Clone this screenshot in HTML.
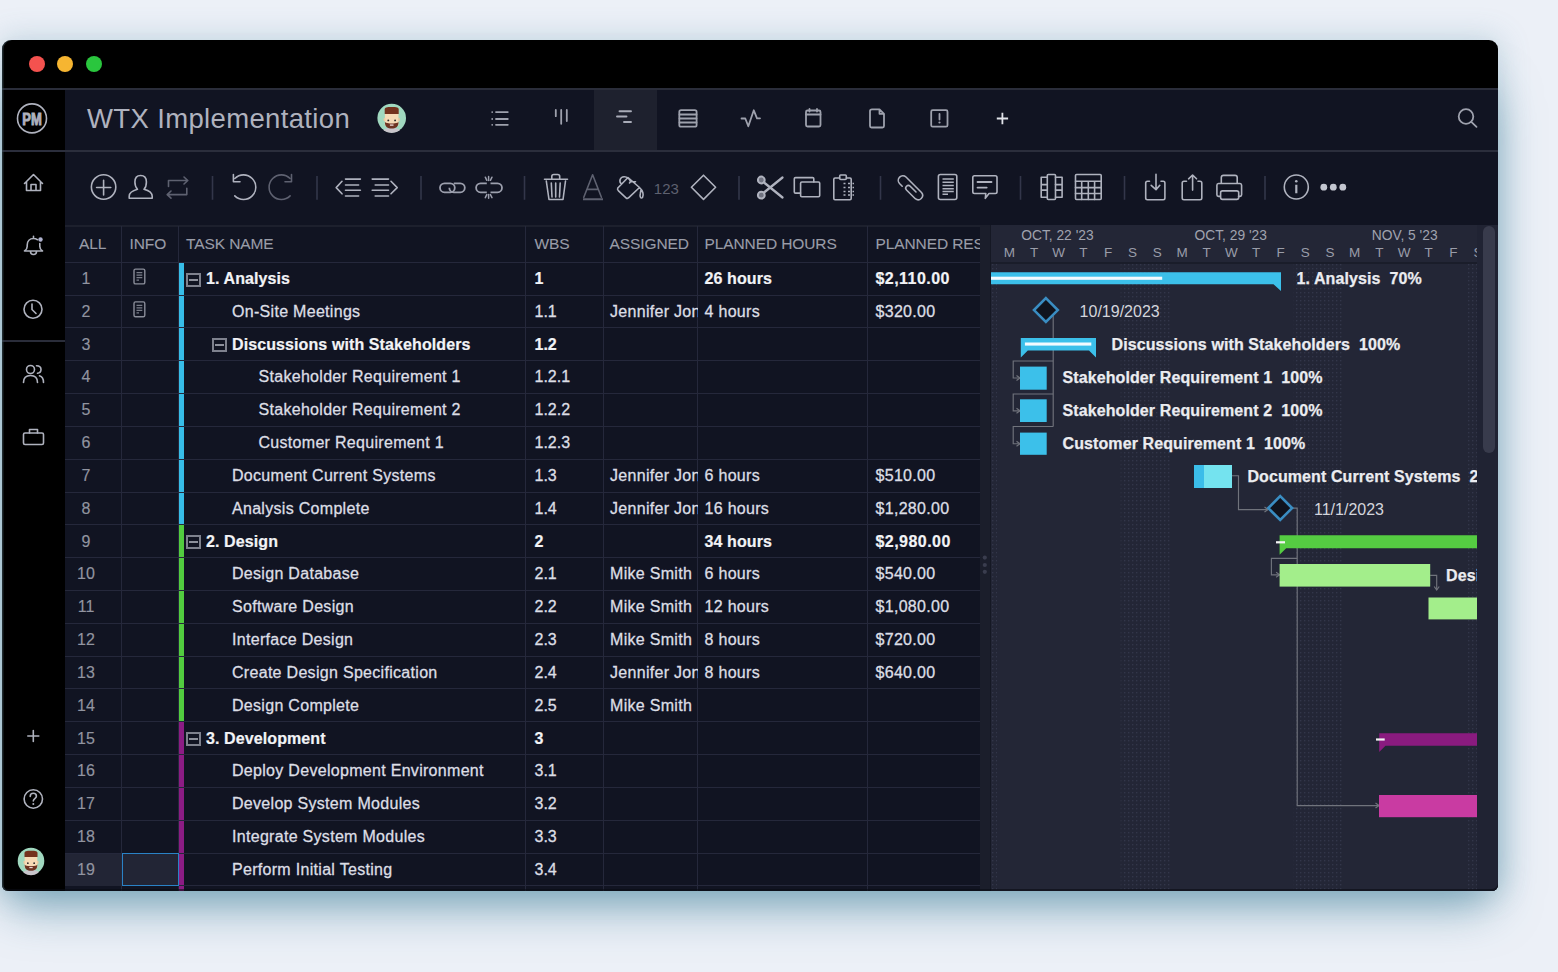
<!DOCTYPE html><html><head><meta charset="utf-8"><style>
*{margin:0;padding:0;box-sizing:border-box}
html,body{width:1558px;height:972px;overflow:hidden}
body{background:#ecf0f7;font-family:"Liberation Sans",sans-serif;position:relative}
.a{position:absolute}
#shadow{position:absolute;left:14px;top:80px;width:1470px;height:800px;border-radius:12px;box-shadow:0 18px 46px 10px rgba(55,122,148,0.56)}
#shadow2{position:absolute;left:2px;top:40px;width:1496px;height:851px;border-radius:9px;box-shadow:0 0 30px 2px rgba(80,140,165,0.28)}
#win{position:absolute;left:2px;top:40px;width:1496px;height:851px;border-radius:9px 9px 6px 6px;overflow:hidden;background:#000}
#wb{position:absolute;left:2px;top:40px;width:1496px;height:851px;border-radius:9px 9px 6px 6px;box-shadow:inset 1.5px 0 0 rgba(60,80,90,0.55), inset 0 -2px 0 rgba(10,12,20,0.6);pointer-events:none}
#in{position:absolute;left:-2px;top:-40px;width:1558px;height:972px}
.t{position:absolute;white-space:nowrap;font-size:16px}
.hd{color:#999ca8;font-size:15.5px;letter-spacing:-0.1px;-webkit-text-stroke:0.1px #999ca8}
.num{color:#9194a0;font-size:16px;text-align:center;width:40px;-webkit-text-stroke:0.15px #9194a0}
.tk{color:#dcdee5;font-size:16px;letter-spacing:0.3px;-webkit-text-stroke:0.3px #dcdee5}
.b{font-weight:bold;color:#f2f3f6;letter-spacing:0.1px;-webkit-text-stroke:0.2px #f2f3f6}
.gl{color:#e6e7ec;font-weight:bold;font-size:15.5px;letter-spacing:0.1px}
svg{position:absolute;left:0;top:0;overflow:visible}
</style></head><body><div id="shadow2"></div><div id="shadow"></div><div id="win"><div id="in"><div class="a" style="left:28.799999999999997px;top:56px;width:16px;height:16px;border-radius:50%;background:#f4524f"></div><div class="a" style="left:57.400000000000006px;top:56px;width:16px;height:16px;border-radius:50%;background:#f6b531"></div><div class="a" style="left:85.7px;top:56px;width:16px;height:16px;border-radius:50%;background:#2ac63e"></div><div class="a" style="left:0;top:88px;width:1558px;height:2px;background:#2a2d3a"></div><div class="a" style="left:65px;top:90px;width:1440px;height:60px;background:#111422"></div><div class="a" style="left:593.5px;top:90px;width:63.5px;height:60px;background:#1e212e"></div><div class="a" style="left:0;top:150px;width:1558px;height:2px;background:#2b2e3c"></div><div class="a" style="left:65px;top:152px;width:1440px;height:740px;background:#111422"></div><div class="a" style="left:0;top:340px;width:65px;height:2px;background:#2a2d3a"></div><div class="t" style="left:87px;top:102px;font-size:27.5px;line-height:34px;color:#afb2be;letter-spacing:0.35px">WTX Implementation</div><div class="a" style="left:65px;top:225px;width:915px;height:1.5px;background:#1d202d"></div><div class="a" style="left:65px;top:262px;width:915px;height:1px;background:#25283b"></div><div class="a" style="left:65px;top:295px;width:915px;height:1px;background:#25283b"></div><div class="a" style="left:65px;top:327px;width:915px;height:1px;background:#25283b"></div><div class="a" style="left:65px;top:360px;width:915px;height:1px;background:#25283b"></div><div class="a" style="left:65px;top:393px;width:915px;height:1px;background:#25283b"></div><div class="a" style="left:65px;top:426px;width:915px;height:1px;background:#25283b"></div><div class="a" style="left:65px;top:459px;width:915px;height:1px;background:#25283b"></div><div class="a" style="left:65px;top:492px;width:915px;height:1px;background:#25283b"></div><div class="a" style="left:65px;top:524px;width:915px;height:1px;background:#25283b"></div><div class="a" style="left:65px;top:557px;width:915px;height:1px;background:#25283b"></div><div class="a" style="left:65px;top:590px;width:915px;height:1px;background:#25283b"></div><div class="a" style="left:65px;top:623px;width:915px;height:1px;background:#25283b"></div><div class="a" style="left:65px;top:656px;width:915px;height:1px;background:#25283b"></div><div class="a" style="left:65px;top:688px;width:915px;height:1px;background:#25283b"></div><div class="a" style="left:65px;top:721px;width:915px;height:1px;background:#25283b"></div><div class="a" style="left:65px;top:754px;width:915px;height:1px;background:#25283b"></div><div class="a" style="left:65px;top:787px;width:915px;height:1px;background:#25283b"></div><div class="a" style="left:65px;top:820px;width:915px;height:1px;background:#25283b"></div><div class="a" style="left:65px;top:853px;width:915px;height:1px;background:#25283b"></div><div class="a" style="left:65px;top:885px;width:915px;height:1px;background:#25283b"></div><div class="a" style="left:121px;top:226px;width:1px;height:670px;background:#25283b"></div><div class="a" style="left:178px;top:226px;width:1px;height:670px;background:#25283b"></div><div class="a" style="left:525px;top:226px;width:1px;height:670px;background:#25283b"></div><div class="a" style="left:603px;top:226px;width:1px;height:670px;background:#25283b"></div><div class="a" style="left:697px;top:226px;width:1px;height:670px;background:#25283b"></div><div class="a" style="left:867px;top:226px;width:1px;height:670px;background:#25283b"></div><div class="t hd" style="left:79px;top:233px;line-height:22px">ALL</div><div class="t hd" style="left:129.5px;top:233px;line-height:22px">INFO</div><div class="t hd" style="left:186px;top:233px;line-height:22px">TASK NAME</div><div class="t hd" style="left:534.5px;top:233px;line-height:22px">WBS</div><div class="t hd" style="left:609.5px;top:233px;line-height:22px">ASSIGNED</div><div class="t hd" style="left:704.5px;top:233px;line-height:22px">PLANNED HOURS</div><div class="t hd" style="left:875.5px;top:233px;line-height:22px">PLANNED RES</div><div class="a" style="left:65px;top:854.14px;width:56px;height:31.83px;background:#222535"></div><div class="a" style="left:122px;top:853.14px;width:57px;height:33.33px;background:#222535;border:1.7px solid #2a82c6"></div><div class="a" style="left:179px;top:262.70px;width:5px;height:31.83px;background:#37bde8"></div><div class="t num" style="left:66px;top:263.00px;line-height:32.83px;height:32.83px">1</div><div class="t tk b" style="left:206px;top:263.00px;line-height:32.83px;height:32.83px">1. Analysis</div><div class="a" style="left:186px;top:272.50px;width:15px;height:14.2px;border:2px solid #7e818d"></div><div class="a" style="left:189.2px;top:278.80px;width:8.6px;height:1.8px;background:#8d909b"></div><div class="t tk b" style="left:534.5px;top:263.00px;line-height:32.83px;height:32.83px;letter-spacing:0">1</div><div class="t tk b" style="left:704.5px;top:263.00px;line-height:32.83px;height:32.83px">26 hours</div><div class="t tk b" style="left:875.5px;top:263.00px;line-height:32.83px;height:32.83px;letter-spacing:0.45px">$2,110.00</div><div class="a" style="left:179px;top:295.53px;width:5px;height:31.83px;background:#37bde8"></div><div class="t num" style="left:66px;top:295.83px;line-height:32.83px;height:32.83px">2</div><div class="t tk" style="left:232px;top:295.83px;line-height:32.83px;height:32.83px">On-Site Meetings</div><div class="t tk" style="left:534.5px;top:295.83px;line-height:32.83px;height:32.83px;letter-spacing:0">1.1</div><div class="a" style="left:603px;top:295.03px;width:94.5px;height:32.83px;overflow:hidden"><div class="t tk" style="left:7px;top:0.8px;line-height:32.83px">Jennifer Jones</div></div><div class="t tk" style="left:704.5px;top:295.83px;line-height:32.83px;height:32.83px">4 hours</div><div class="t tk" style="left:875.5px;top:295.83px;line-height:32.83px;height:32.83px">$320.00</div><div class="a" style="left:179px;top:328.36px;width:5px;height:31.83px;background:#37bde8"></div><div class="t num" style="left:66px;top:328.66px;line-height:32.83px;height:32.83px">3</div><div class="t tk b" style="left:232px;top:328.66px;line-height:32.83px;height:32.83px">Discussions with Stakeholders</div><div class="a" style="left:212px;top:338.16px;width:15px;height:14.2px;border:2px solid #7e818d"></div><div class="a" style="left:215.2px;top:344.46px;width:8.6px;height:1.8px;background:#8d909b"></div><div class="t tk b" style="left:534.5px;top:328.66px;line-height:32.83px;height:32.83px;letter-spacing:0">1.2</div><div class="a" style="left:179px;top:361.19px;width:5px;height:31.83px;background:#37bde8"></div><div class="t num" style="left:66px;top:361.49px;line-height:32.83px;height:32.83px">4</div><div class="t tk" style="left:258.5px;top:361.49px;line-height:32.83px;height:32.83px">Stakeholder Requirement 1</div><div class="t tk" style="left:534.5px;top:361.49px;line-height:32.83px;height:32.83px;letter-spacing:0">1.2.1</div><div class="a" style="left:179px;top:394.02px;width:5px;height:31.83px;background:#37bde8"></div><div class="t num" style="left:66px;top:394.32px;line-height:32.83px;height:32.83px">5</div><div class="t tk" style="left:258.5px;top:394.32px;line-height:32.83px;height:32.83px">Stakeholder Requirement 2</div><div class="t tk" style="left:534.5px;top:394.32px;line-height:32.83px;height:32.83px;letter-spacing:0">1.2.2</div><div class="a" style="left:179px;top:426.85px;width:5px;height:31.83px;background:#37bde8"></div><div class="t num" style="left:66px;top:427.15px;line-height:32.83px;height:32.83px">6</div><div class="t tk" style="left:258.5px;top:427.15px;line-height:32.83px;height:32.83px">Customer Requirement 1</div><div class="t tk" style="left:534.5px;top:427.15px;line-height:32.83px;height:32.83px;letter-spacing:0">1.2.3</div><div class="a" style="left:179px;top:459.68px;width:5px;height:31.83px;background:#37bde8"></div><div class="t num" style="left:66px;top:459.98px;line-height:32.83px;height:32.83px">7</div><div class="t tk" style="left:232px;top:459.98px;line-height:32.83px;height:32.83px">Document Current Systems</div><div class="t tk" style="left:534.5px;top:459.98px;line-height:32.83px;height:32.83px;letter-spacing:0">1.3</div><div class="a" style="left:603px;top:459.18px;width:94.5px;height:32.83px;overflow:hidden"><div class="t tk" style="left:7px;top:0.8px;line-height:32.83px">Jennifer Jones</div></div><div class="t tk" style="left:704.5px;top:459.98px;line-height:32.83px;height:32.83px">6 hours</div><div class="t tk" style="left:875.5px;top:459.98px;line-height:32.83px;height:32.83px">$510.00</div><div class="a" style="left:179px;top:492.51px;width:5px;height:31.83px;background:#37bde8"></div><div class="t num" style="left:66px;top:492.81px;line-height:32.83px;height:32.83px">8</div><div class="t tk" style="left:232px;top:492.81px;line-height:32.83px;height:32.83px">Analysis Complete</div><div class="t tk" style="left:534.5px;top:492.81px;line-height:32.83px;height:32.83px;letter-spacing:0">1.4</div><div class="a" style="left:603px;top:492.01px;width:94.5px;height:32.83px;overflow:hidden"><div class="t tk" style="left:7px;top:0.8px;line-height:32.83px">Jennifer Jones</div></div><div class="t tk" style="left:704.5px;top:492.81px;line-height:32.83px;height:32.83px">16 hours</div><div class="t tk" style="left:875.5px;top:492.81px;line-height:32.83px;height:32.83px">$1,280.00</div><div class="a" style="left:179px;top:525.34px;width:5px;height:31.83px;background:#52cc3f"></div><div class="t num" style="left:66px;top:525.64px;line-height:32.83px;height:32.83px">9</div><div class="t tk b" style="left:206px;top:525.64px;line-height:32.83px;height:32.83px">2. Design</div><div class="a" style="left:186px;top:535.14px;width:15px;height:14.2px;border:2px solid #7e818d"></div><div class="a" style="left:189.2px;top:541.44px;width:8.6px;height:1.8px;background:#8d909b"></div><div class="t tk b" style="left:534.5px;top:525.64px;line-height:32.83px;height:32.83px;letter-spacing:0">2</div><div class="t tk b" style="left:704.5px;top:525.64px;line-height:32.83px;height:32.83px">34 hours</div><div class="t tk b" style="left:875.5px;top:525.64px;line-height:32.83px;height:32.83px;letter-spacing:0.45px">$2,980.00</div><div class="a" style="left:179px;top:558.17px;width:5px;height:31.83px;background:#52cc3f"></div><div class="t num" style="left:66px;top:558.47px;line-height:32.83px;height:32.83px">10</div><div class="t tk" style="left:232px;top:558.47px;line-height:32.83px;height:32.83px">Design Database</div><div class="t tk" style="left:534.5px;top:558.47px;line-height:32.83px;height:32.83px;letter-spacing:0">2.1</div><div class="a" style="left:603px;top:557.67px;width:94.5px;height:32.83px;overflow:hidden"><div class="t tk" style="left:7px;top:0.8px;line-height:32.83px">Mike Smith</div></div><div class="t tk" style="left:704.5px;top:558.47px;line-height:32.83px;height:32.83px">6 hours</div><div class="t tk" style="left:875.5px;top:558.47px;line-height:32.83px;height:32.83px">$540.00</div><div class="a" style="left:179px;top:591.00px;width:5px;height:31.83px;background:#52cc3f"></div><div class="t num" style="left:66px;top:591.30px;line-height:32.83px;height:32.83px">11</div><div class="t tk" style="left:232px;top:591.30px;line-height:32.83px;height:32.83px">Software Design</div><div class="t tk" style="left:534.5px;top:591.30px;line-height:32.83px;height:32.83px;letter-spacing:0">2.2</div><div class="a" style="left:603px;top:590.50px;width:94.5px;height:32.83px;overflow:hidden"><div class="t tk" style="left:7px;top:0.8px;line-height:32.83px">Mike Smith</div></div><div class="t tk" style="left:704.5px;top:591.30px;line-height:32.83px;height:32.83px">12 hours</div><div class="t tk" style="left:875.5px;top:591.30px;line-height:32.83px;height:32.83px">$1,080.00</div><div class="a" style="left:179px;top:623.83px;width:5px;height:31.83px;background:#52cc3f"></div><div class="t num" style="left:66px;top:624.13px;line-height:32.83px;height:32.83px">12</div><div class="t tk" style="left:232px;top:624.13px;line-height:32.83px;height:32.83px">Interface Design</div><div class="t tk" style="left:534.5px;top:624.13px;line-height:32.83px;height:32.83px;letter-spacing:0">2.3</div><div class="a" style="left:603px;top:623.33px;width:94.5px;height:32.83px;overflow:hidden"><div class="t tk" style="left:7px;top:0.8px;line-height:32.83px">Mike Smith</div></div><div class="t tk" style="left:704.5px;top:624.13px;line-height:32.83px;height:32.83px">8 hours</div><div class="t tk" style="left:875.5px;top:624.13px;line-height:32.83px;height:32.83px">$720.00</div><div class="a" style="left:179px;top:656.66px;width:5px;height:31.83px;background:#52cc3f"></div><div class="t num" style="left:66px;top:656.96px;line-height:32.83px;height:32.83px">13</div><div class="t tk" style="left:232px;top:656.96px;line-height:32.83px;height:32.83px">Create Design Specification</div><div class="t tk" style="left:534.5px;top:656.96px;line-height:32.83px;height:32.83px;letter-spacing:0">2.4</div><div class="a" style="left:603px;top:656.16px;width:94.5px;height:32.83px;overflow:hidden"><div class="t tk" style="left:7px;top:0.8px;line-height:32.83px">Jennifer Jones</div></div><div class="t tk" style="left:704.5px;top:656.96px;line-height:32.83px;height:32.83px">8 hours</div><div class="t tk" style="left:875.5px;top:656.96px;line-height:32.83px;height:32.83px">$640.00</div><div class="a" style="left:179px;top:689.49px;width:5px;height:31.83px;background:#52cc3f"></div><div class="t num" style="left:66px;top:689.79px;line-height:32.83px;height:32.83px">14</div><div class="t tk" style="left:232px;top:689.79px;line-height:32.83px;height:32.83px">Design Complete</div><div class="t tk" style="left:534.5px;top:689.79px;line-height:32.83px;height:32.83px;letter-spacing:0">2.5</div><div class="a" style="left:603px;top:688.99px;width:94.5px;height:32.83px;overflow:hidden"><div class="t tk" style="left:7px;top:0.8px;line-height:32.83px">Mike Smith</div></div><div class="a" style="left:179px;top:722.32px;width:5px;height:31.83px;background:#8c1c84"></div><div class="t num" style="left:66px;top:722.62px;line-height:32.83px;height:32.83px">15</div><div class="t tk b" style="left:206px;top:722.62px;line-height:32.83px;height:32.83px">3. Development</div><div class="a" style="left:186px;top:732.12px;width:15px;height:14.2px;border:2px solid #7e818d"></div><div class="a" style="left:189.2px;top:738.42px;width:8.6px;height:1.8px;background:#8d909b"></div><div class="t tk b" style="left:534.5px;top:722.62px;line-height:32.83px;height:32.83px;letter-spacing:0">3</div><div class="a" style="left:179px;top:755.15px;width:5px;height:31.83px;background:#8c1c84"></div><div class="t num" style="left:66px;top:755.45px;line-height:32.83px;height:32.83px">16</div><div class="t tk" style="left:232px;top:755.45px;line-height:32.83px;height:32.83px">Deploy Development Environment</div><div class="t tk" style="left:534.5px;top:755.45px;line-height:32.83px;height:32.83px;letter-spacing:0">3.1</div><div class="a" style="left:179px;top:787.98px;width:5px;height:31.83px;background:#8c1c84"></div><div class="t num" style="left:66px;top:788.28px;line-height:32.83px;height:32.83px">17</div><div class="t tk" style="left:232px;top:788.28px;line-height:32.83px;height:32.83px">Develop System Modules</div><div class="t tk" style="left:534.5px;top:788.28px;line-height:32.83px;height:32.83px;letter-spacing:0">3.2</div><div class="a" style="left:179px;top:820.81px;width:5px;height:31.83px;background:#8c1c84"></div><div class="t num" style="left:66px;top:821.11px;line-height:32.83px;height:32.83px">18</div><div class="t tk" style="left:232px;top:821.11px;line-height:32.83px;height:32.83px">Integrate System Modules</div><div class="t tk" style="left:534.5px;top:821.11px;line-height:32.83px;height:32.83px;letter-spacing:0">3.3</div><div class="a" style="left:179px;top:853.64px;width:5px;height:31.83px;background:#8c1c84"></div><div class="t num" style="left:66px;top:853.94px;line-height:32.83px;height:32.83px">19</div><div class="t tk" style="left:232px;top:853.94px;line-height:32.83px;height:32.83px">Perform Initial Testing</div><div class="t tk" style="left:534.5px;top:853.94px;line-height:32.83px;height:32.83px;letter-spacing:0">3.4</div><div class="a" style="left:179px;top:886.47px;width:5px;height:31.83px;background:#8c1c84"></div><div class="a" style="left:979.5px;top:225px;width:11px;height:670px;background:#1b1e2b"></div><div class="a" style="left:990px;top:225px;width:1px;height:670px;background:#151824"></div><div class="a" style="left:991px;top:225px;width:486px;height:670px;background:#232636"></div><div class="a" style="left:1477px;top:225px;width:25px;height:670px;background:#202333"></div><div class="a" style="left:1483px;top:226px;width:11.5px;height:227px;border-radius:6px;background:#383b4c"></div><div class="a" style="left:991px;top:262px;width:486px;height:1.5px;background:#1a1d2a"></div><svg width="1558" height="972" viewBox="0 0 1558 972"><circle cx="32" cy="118.4" r="14.5" fill="none" stroke="#afb2be" stroke-width="1.6" stroke-linecap="round" stroke-linejoin="round" stroke-width="2.4"/><text x="22.3" y="124.8" font-family="Liberation Sans" font-weight="bold" font-size="16" fill="#afb2be" stroke="#afb2be" stroke-width="0.9" textLength="19.5" lengthAdjust="spacingAndGlyphs">PM</text><path d="M24.5,183.5 L33.5,174.5 L42.5,183.5 M26.5,181.5 V190.5 H40.5 V181.5 M31,190.5 V184.5 H36 V190.5" fill="none" stroke="#afb2be" stroke-width="1.6" stroke-linecap="round" stroke-linejoin="round" stroke-width="1.5"/><path d="M33.5,236.3 V238.5 M27.2,245 C27.2,241 29.8,238.5 33.5,238.5 C35,238.5 36.3,238.9 37.3,239.7 M39.8,243.5 V246.5 C39.8,248.5 41,250 42.5,251 H24.5 C26,250 27.2,248.5 27.2,246.5 V245 M30.5,251.5 C30.5,255.5 36.5,255.5 36.5,251.5" fill="none" stroke="#afb2be" stroke-width="1.6" stroke-linecap="round" stroke-linejoin="round" stroke-width="1.5"/><circle cx="40.5" cy="239.5" r="2.2" fill="#b0b3d0"/><circle cx="33" cy="309.3" r="9" fill="none" stroke="#afb2be" stroke-width="1.6" stroke-linecap="round" stroke-linejoin="round" stroke-width="1.5"/><path d="M32,304 V309.5 L36,313.5" fill="none" stroke="#afb2be" stroke-width="1.6" stroke-linecap="round" stroke-linejoin="round" stroke-width="1.5"/><path d="M26.5,369.5 a4,4 0 1 0 8,0 a4,4 0 1 0 -8,0 M23.5,382.5 C23.5,377 26.5,375.5 30.5,375.5 C34.5,375.5 37.5,377 37.5,382.5 M36.5,365.8 C39.5,365.8 41,367.5 41,369.5 C41,371.5 39.5,373 37.5,373.3 M39.5,375.8 C42,376.5 43.5,378.5 43.5,382.5" fill="none" stroke="#afb2be" stroke-width="1.6" stroke-linecap="round" stroke-linejoin="round" stroke-width="1.5"/><rect x="23.5" y="433" width="20" height="11.5" rx="1.5" fill="none" stroke="#afb2be" stroke-width="1.6" stroke-linecap="round" stroke-linejoin="round" stroke-width="1.5"/><path d="M29.5,433 V429.5 H37.5 V433" fill="none" stroke="#afb2be" stroke-width="1.6" stroke-linecap="round" stroke-linejoin="round" stroke-width="1.5"/><path d="M33.3,730.5 V741.5 M27.8,736 H38.8" fill="none" stroke="#afb2be" stroke-width="1.6" stroke-linecap="round" stroke-linejoin="round" stroke-width="1.6"/><circle cx="33.3" cy="799" r="9.2" fill="none" stroke="#afb2be" stroke-width="1.6" stroke-linecap="round" stroke-linejoin="round" stroke-width="1.5"/><path d="M30.2,796.5 C30.2,794.5 31.5,793.3 33.3,793.3 C35.2,793.3 36.4,794.6 36.4,796.2 C36.4,798.5 33.3,798.8 33.3,801" fill="none" stroke="#afb2be" stroke-width="1.6" stroke-linecap="round" stroke-linejoin="round" stroke-width="1.5"/><circle cx="33.3" cy="804" r="1" fill="#afb2be"/><g transform="translate(31,861) scale(0.9300699300699301)"><circle cx="0" cy="0" r="14.3" fill="#a0d8bf"/><path d="M-8,12 C-7,10.2 -4,9.8 0,9.8 C4,9.8 7,10.2 8,12 L8,12.5 A14.3,14.3 0 0 1 -8,12.5 Z" fill="#c9c5cb"/><rect x="-6.8" y="-5" width="13.6" height="13" rx="1.5" fill="#f6dab6"/><rect x="-8" y="0" width="1.6" height="3" fill="#eccba3"/><rect x="6.4" y="0" width="1.6" height="3" fill="#eccba3"/><path d="M-7,-4.2 V-8.5 C-7,-10.5 -5,-11 0,-11 C5,-11 7,-10.5 7,-8.5 V-4.2 Z" fill="#74321e"/><path d="M-6.8,4 C-6.8,9 -4,10.5 0,10.5 C4,10.5 6.8,9 6.8,4 C5,5.5 3,5.3 0,5.3 C-3,5.3 -5,5.5 -6.8,4 Z" fill="#6e3322"/><rect x="-1.8" y="6.3" width="3.6" height="1.4" fill="#e9d4d0"/><circle cx="-3.4" cy="2.3" r="0.95" fill="#2a2a2a"/><circle cx="3.4" cy="2.3" r="0.95" fill="#2a2a2a"/></g><g transform="translate(391.7,118.1) scale(1.0)"><circle cx="0" cy="0" r="14.3" fill="#a0d8bf"/><path d="M-8,12 C-7,10.2 -4,9.8 0,9.8 C4,9.8 7,10.2 8,12 L8,12.5 A14.3,14.3 0 0 1 -8,12.5 Z" fill="#c9c5cb"/><rect x="-6.8" y="-5" width="13.6" height="13" rx="1.5" fill="#f6dab6"/><rect x="-8" y="0" width="1.6" height="3" fill="#eccba3"/><rect x="6.4" y="0" width="1.6" height="3" fill="#eccba3"/><path d="M-7,-4.2 V-8.5 C-7,-10.5 -5,-11 0,-11 C5,-11 7,-10.5 7,-8.5 V-4.2 Z" fill="#74321e"/><path d="M-6.8,4 C-6.8,9 -4,10.5 0,10.5 C4,10.5 6.8,9 6.8,4 C5,5.5 3,5.3 0,5.3 C-3,5.3 -5,5.5 -6.8,4 Z" fill="#6e3322"/><rect x="-1.8" y="6.3" width="3.6" height="1.4" fill="#e9d4d0"/><circle cx="-3.4" cy="2.3" r="0.95" fill="#2a2a2a"/><circle cx="3.4" cy="2.3" r="0.95" fill="#2a2a2a"/></g><path d="M496,112.1 H507.8 M496,119 H507.8 M496,124.8 H507.8" fill="none" stroke="#9ea1ad" stroke-width="1.8" stroke-linecap="round"/><circle cx="492.2" cy="112.1" r="0.9" fill="#9ea1ad"/><circle cx="492.2" cy="119" r="0.9" fill="#9ea1ad"/><circle cx="492.2" cy="124.8" r="0.9" fill="#9ea1ad"/><path d="M555.8,110 V116.2 M561.2,110 V123.8 M566.8,110 V121" fill="none" stroke="#9ea1ad" stroke-width="1.8" stroke-linecap="round"/><path d="M619.5,111.3 H631 M617,116.5 H626.5 M624,122 H631" fill="none" stroke="#a9acb8" stroke-width="1.9" stroke-linecap="round"/><rect x="679.3" y="110.2" width="17.3" height="16.5" rx="1.8" fill="none" stroke="#9ea1ad" stroke-width="1.8" stroke-linecap="round" stroke-width="1.6"/><path d="M679.5,114.5 H696.5 M679.5,118.5 H696.5 M679.5,122.5 H696.5" fill="none" stroke="#9ea1ad" stroke-width="1.8" stroke-linecap="round" stroke-width="1.6"/><path d="M741.5,118.5 H745.3 L748.3,126.3 L753.8,110.3 L757,118.3 H760" fill="none" stroke="#9ea1ad" stroke-width="1.8" stroke-linecap="round" stroke-width="1.7" stroke-linejoin="round"/><rect x="806" y="110.5" width="14.5" height="16" rx="1.5" fill="none" stroke="#9ea1ad" stroke-width="1.8" stroke-linecap="round" stroke-width="1.6"/><path d="M806,114.5 H820.5 M809.5,109 V111.5 M817,109 V111.5" fill="none" stroke="#9ea1ad" stroke-width="1.8" stroke-linecap="round" stroke-width="1.6"/><path d="M872,109.3 H879.5 L884,113.8 V126 Q884,127.5 882.5,127.5 H871.5 Q870,127.5 870,126 V111 Q870,109.3 872,109.3 Z M879.5,109.3 V113.8 H884" fill="none" stroke="#9ea1ad" stroke-width="1.8" stroke-linecap="round" stroke-width="1.6" stroke-linejoin="round"/><rect x="931.2" y="110.2" width="16.3" height="16.5" rx="1.5" fill="none" stroke="#9ea1ad" stroke-width="1.8" stroke-linecap="round" stroke-width="1.6"/><path d="M939.5,114 V119.5" fill="none" stroke="#9ea1ad" stroke-width="1.8" stroke-linecap="round" stroke-width="2"/><circle cx="939.5" cy="122.5" r="1.1" fill="#9ea1ad"/><path d="M1002.4,112.8 V124.2 M996.8,118.5 H1008.1" fill="none" stroke="#e2e4ea" stroke-width="1.8"/><circle cx="1466" cy="116.5" r="7.3" fill="none" stroke="#9ea1ad" stroke-width="1.8" stroke-linecap="round" stroke-width="1.7"/><path d="M1471.3,121.8 L1476.5,126.8" fill="none" stroke="#9ea1ad" stroke-width="1.8" stroke-linecap="round" stroke-width="1.7"/><path d="M212.5,176 V199.8" stroke="#33364a" stroke-width="1.6"/><path d="M317,176 V199.8" stroke="#33364a" stroke-width="1.6"/><path d="M421,176 V199.8" stroke="#33364a" stroke-width="1.6"/><path d="M524.5,176 V199.8" stroke="#33364a" stroke-width="1.6"/><path d="M739,176 V199.8" stroke="#33364a" stroke-width="1.6"/><path d="M880.5,176 V199.8" stroke="#33364a" stroke-width="1.6"/><path d="M1020.5,176 V199.8" stroke="#33364a" stroke-width="1.6"/><path d="M1124.5,176 V199.8" stroke="#33364a" stroke-width="1.6"/><path d="M1265,176 V199.8" stroke="#33364a" stroke-width="1.6"/><circle cx="103.6" cy="187" r="12.2" fill="none" stroke="#afb2be" stroke-width="1.6" stroke-linecap="round" stroke-linejoin="round"/><path d="M96.6,187.5 H110.8 M103.6,180.3 V195" fill="none" stroke="#afb2be" stroke-width="1.6" stroke-linecap="round" stroke-linejoin="round"/><path d="M140.6,175.5 C136.8,175.5 134.9,178.2 134.9,182 C134.9,185.5 136,187.8 137.5,189.3 C133,190.5 129.2,192.5 129.2,196.3 V198.3 H152.2 V196.3 C152.2,192.5 148.5,190.5 144,189.3 C145.5,187.8 146.4,185.5 146.4,182 C146.4,178.2 144.5,175.5 140.6,175.5 Z" fill="none" stroke="#afb2be" stroke-width="1.6" stroke-linecap="round" stroke-linejoin="round"/><path d="M168.5,186.5 V180.5 H187.5 M184,177 L187.8,180.5 L184,184 M186.8,188.3 V194.6 H167.2 M171,191 L167.2,194.6 L171,198.2" fill="none" stroke="#5e6170" stroke-width="1.6" stroke-linecap="round" stroke-linejoin="round"/><path d="M234.8,178.5 A12.3,12.3 0 1 1 234.8,195.9" fill="none" stroke="#afb2be" stroke-width="1.6" stroke-linecap="round" stroke-linejoin="round"/><path d="M233.4,174.5 V181.8 H240" fill="none" stroke="#afb2be" stroke-width="1.6" stroke-linecap="round" stroke-linejoin="round"/><path d="M290.1,178.5 A12.3,12.3 0 1 0 290.1,195.9" fill="none" stroke="#5e6170" stroke-width="1.6" stroke-linecap="round" stroke-linejoin="round"/><path d="M291.5,174.5 V181.8 H285" fill="none" stroke="#5e6170" stroke-width="1.6" stroke-linecap="round" stroke-linejoin="round"/><path d="M342,181.3 L336.2,187.6 L342,193.8 M345.5,179.1 H360.4 M345.5,185 H358.6 M345.5,190.3 H360.4 M345.5,196 H358.6" fill="none" stroke="#afb2be" stroke-width="1.6" stroke-linecap="round" stroke-linejoin="round" stroke-width="1.8"/><path d="M391,181.3 L397.2,187.6 L391,193.8 M372.2,179.1 H388.5 M375.2,185 H388.5 M372.2,190.3 H388.5 M375.2,196 H388.5" fill="none" stroke="#afb2be" stroke-width="1.6" stroke-linecap="round" stroke-linejoin="round" stroke-width="1.8"/><rect x="440" y="183.3" width="14.8" height="9" rx="4.5" fill="none" stroke="#9c9fad" stroke-width="1.8"/><path d="M454.8,187.8 m-5.5,0 a4.5,4.5 0 0 0 4.5,4.5 H460.3 A4.5,4.5 0 0 0 460.3,183.3 H453.8" fill="none" stroke="#9c9fad" stroke-width="1.8"/><path d="M486.8,183.3 H480.6 A4.5,4.5 0 0 0 480.6,192.3 H486.8 M490.5,183.3 H497.5 A4.5,4.5 0 0 1 497.5,192.3 H490.5" fill="none" stroke="#9c9fad" stroke-width="1.8"/><path d="M488.6,176.5 V180.5 M485.3,177.2 L486.8,180.3 M492,177.2 L490.4,180.3 M488.6,194.5 V198.2 M485.3,197.7 L486.8,194.6 M492,197.7 L490.4,194.6" stroke="#9c9fad" stroke-width="1.5" stroke-linecap="round"/><path d="M544.5,179.3 H567.5 M551.8,179 V176.5 Q551.8,174.5 553.8,174.5 H557.7 Q559.7,174.5 559.7,176.5 V179 M546.3,181 L549,199.5 H563 L565.5,181 M551.3,183 L552,197 M555.7,183 V197 M560.2,183 L559.5,197" fill="none" stroke="#afb2be" stroke-width="1.6" stroke-linecap="round" stroke-linejoin="round"/><path d="M583.8,197.2 L592.6,174.8 L601.4,197.2 M587.5,189.4 H597.8" fill="none" stroke="#5e6170" stroke-width="1.6" stroke-linecap="round" stroke-linejoin="round"/><path d="M583,199.3 H603" stroke="#5e6170" stroke-width="2"/><path d="M617.8,188 L628,177.5 L639.5,187.5 L628.5,197.8 Q627.3,199 626,197.8 L618.5,190.8 Q617,189.5 617.8,188 Z M621.5,184 C618.5,181.5 620,177 624,176.8 C627,176.6 630,179 630.5,181.8 L629.5,183 M630.5,181.8 H635.5 M639.5,187.5 C643,190.5 644,195 642.5,197.5 C641,199 639.5,197 640.3,193.5 L641,190" fill="none" stroke="#afb2be" stroke-width="1.6" stroke-linecap="round" stroke-linejoin="round" stroke-width="1.5"/><text x="653.8" y="193.5" font-family="Liberation Sans" font-size="15.5" fill="#5e6170" textLength="25" lengthAdjust="spacingAndGlyphs">123</text><path d="M703.5,175.2 L715.6,187.3 L703.5,199.4 L691.4,187.3 Z" fill="none" stroke="#afb2be" stroke-width="1.6" stroke-linecap="round" stroke-linejoin="round" stroke-width="1.7"/><circle cx="761.3" cy="180" r="3.4" fill="#6f7280" stroke="#afb2be" stroke-width="2"/><circle cx="761.3" cy="195.2" r="3.4" fill="#6f7280" stroke="#afb2be" stroke-width="2"/><path d="M764,182.5 L782.5,197.5 M764,192.5 L782.5,177.5" stroke="#afb2be" stroke-width="2.3" stroke-linecap="round"/><path d="M800.5,193.1 H795.5 Q794.3,193.1 794.3,191.9 V178.8 Q794.3,177.6 795.5,177.6 H812.6 Q813.8,177.6 813.8,178.8 V182" fill="none" stroke="#afb2be" stroke-width="1.6" stroke-linecap="round" stroke-linejoin="round" stroke-width="1.8"/><rect x="800.6" y="182" width="19.1" height="14.8" rx="1.2" fill="none" stroke="#afb2be" stroke-width="1.6" stroke-linecap="round" stroke-linejoin="round" stroke-width="1.8"/><path d="M839.5,178 H835 Q833.8,178 833.8,179.2 V198.5 Q833.8,199.7 835,199.7 H850 Q851.2,199.7 851.2,198.5 V179.2 Q851.2,178 850,178 H846.5" fill="none" stroke="#afb2be" stroke-width="1.6" stroke-linecap="round" stroke-linejoin="round" stroke-width="1.7"/><rect x="839.7" y="175" width="6.6" height="4.5" rx="1" fill="none" stroke="#afb2be" stroke-width="1.6" stroke-linecap="round" stroke-linejoin="round" stroke-width="1.7"/><path d="M843.5,183.5 H845.5 M848,183.5 H850 M852.5,183.5 H854 M843.5,187.5 H845.5 M848,187.5 H850 M852.5,187.5 H854 M843.5,191.5 H845.5 M848,191.5 H850 M852.5,191.5 H854 M843.5,195 H845.5 M848,195 H850 M852.5,195 H854" stroke="#afb2be" stroke-width="1.6"/><path d="M902.2,186.2 L899.5,183.5 A4.6,4.6 0 0 1 906,177 L921.5,192.5 A4.4,4.4 0 0 1 915.3,198.7 L906.5,190 A2.6,2.6 0 0 1 910.2,186.3 L916,192" fill="none" stroke="#afb2be" stroke-width="1.6" stroke-linecap="round" stroke-linejoin="round" stroke-width="1.8"/><rect x="938.4" y="174.5" width="18.4" height="25" rx="2" fill="none" stroke="#afb2be" stroke-width="1.6" stroke-linecap="round" stroke-linejoin="round" stroke-width="1.8"/><path d="M942.5,179 H953.8 M942.5,182.3 H953.8 M942.5,185.6 H953.8 M942.5,188.8 H953.8 M942.5,191.5 H953.8 M942.5,194.3 H948" stroke="#afb2be" stroke-width="1.5"/><path d="M974.5,175.8 H995.3 Q997,175.8 997,177.5 V191.8 Q997,193.5 995.3,193.5 H989 L985.3,198.3 L985.8,193.5 H974.5 Q972.8,193.5 972.8,191.8 V177.5 Q972.8,175.8 974.5,175.8 Z" fill="none" stroke="#afb2be" stroke-width="1.6" stroke-linecap="round" stroke-linejoin="round" stroke-width="1.8"/><path d="M977.5,182 H991.5 M977.5,187.6 H986.7" stroke="#afb2be" stroke-width="1.8" stroke-linecap="round"/><rect x="1047.3" y="174.5" width="8.2" height="25" rx="1" fill="none" stroke="#afb2be" stroke-width="1.6" stroke-linecap="round" stroke-linejoin="round" stroke-width="1.7"/><path d="M1047.3,177.3 H1041.2 V197.2 H1047.3 M1041.2,184.6 H1047.3 M1041.2,190.1 H1047.3 M1055.5,177.3 H1062.1 V197.2 H1055.5 M1055.5,184.6 H1062.1 M1055.5,190.1 H1062.1" fill="none" stroke="#afb2be" stroke-width="1.6" stroke-linecap="round" stroke-linejoin="round" stroke-width="1.7"/><rect x="1075.5" y="174.5" width="25.7" height="25" rx="1" fill="none" stroke="#afb2be" stroke-width="1.6" stroke-linecap="round" stroke-linejoin="round" stroke-width="1.7"/><path d="M1075.5,181.3 H1101.2 M1075.5,187.6 H1101.2 M1075.5,193.5 H1101.2 M1081.7,181.3 V199.5 M1088.3,181.3 V199.5 M1094.6,181.3 V199.5" fill="none" stroke="#afb2be" stroke-width="1.6" stroke-linecap="round" stroke-linejoin="round" stroke-width="1.5"/><path d="M1149.5,181.3 H1147.5 Q1145.7,181.3 1145.7,183 V198 Q1145.7,199.7 1147.5,199.7 H1163.2 Q1164.9,199.7 1164.9,198 V183 Q1164.9,181.3 1163.2,181.3 H1161 M1156,174.3 V189.4 M1151.2,185.3 L1156,189.6 L1159.8,185.3" fill="none" stroke="#afb2be" stroke-width="1.6" stroke-linecap="round" stroke-linejoin="round" stroke-width="1.7"/><path d="M1186.5,181.3 H1184 Q1182.2,181.3 1182.2,183 V198 Q1182.2,199.7 1184,199.7 H1200 Q1201.8,199.7 1201.8,198 V183 Q1201.8,181.3 1200,181.3 H1198 M1192.6,190.1 V175.2 M1188.6,178.8 L1192.6,175 L1196.5,178.8" fill="none" stroke="#afb2be" stroke-width="1.6" stroke-linecap="round" stroke-linejoin="round" stroke-width="1.7"/><path d="M1221.3,183.5 V177.5 Q1221.3,175.4 1223.5,175.4 H1235 Q1237.2,175.4 1237.2,177.5 V183.5 M1220.5,196.4 H1218.5 Q1216.9,196.4 1216.9,194.8 V185.2 Q1216.9,183.5 1218.5,183.5 H1240 Q1241.6,183.5 1241.6,185.2 V194.8 Q1241.6,196.4 1240,196.4 H1238.5 M1222.5,190.9 H1236.8 Q1238.7,190.9 1238.7,192.8 V197.3 Q1238.7,199.4 1236.8,199.4 H1222.5 Q1220.6,199.4 1220.6,197.3 V192.8 Q1220.6,190.9 1222.5,190.9 Z" fill="none" stroke="#afb2be" stroke-width="1.6" stroke-linecap="round" stroke-linejoin="round" stroke-width="1.7"/><circle cx="1296.3" cy="187" r="12" fill="none" stroke="#afb2be" stroke-width="1.6" stroke-linecap="round" stroke-linejoin="round" stroke-width="1.6"/><circle cx="1296.3" cy="181.3" r="1.3" fill="#afb2be"/><path d="M1296.3,184.8 V193.2" stroke="#afb2be" stroke-width="2.2"/><circle cx="1323.8" cy="187.2" r="3.4" fill="#c3c6d0"/><circle cx="1333.3" cy="187.2" r="3.4" fill="#c3c6d0"/><circle cx="1342.8" cy="187.2" r="3.4" fill="#c3c6d0"/><defs><pattern id="dots" x="0" y="0" width="4" height="4" patternUnits="userSpaceOnUse"><rect x="0" y="0" width="1.3" height="1.3" fill="#33364a"/></pattern><clipPath id="gclip"><rect x="991" y="263" width="486" height="640"/></clipPath><clipPath id="hclip"><rect x="991" y="225" width="486" height="38"/></clipPath></defs><rect x="991" y="264" width="6.0" height="640" fill="url(#dots)" opacity="1"/><rect x="1120.7" y="264" width="49.2" height="640" fill="url(#dots)" opacity="1"/><rect x="1293.4" y="264" width="49.3" height="640" fill="url(#dots)" opacity="1"/><rect x="1466.1" y="264" width="10.9" height="640" fill="url(#dots)" opacity="1"/><g clip-path="url(#hclip)" font-family="Liberation Sans" fill="#a0a3af"><text x="1021.2" y="240.2" font-size="13.8">OCT, 22 '23</text><text x="1194.5" y="240.2" font-size="13.8">OCT, 29 '23</text><text x="1371.8" y="240.2" font-size="13.8">NOV, 5 '23</text><text x="1009.3" y="257" font-size="13.5" text-anchor="middle" fill="#9a9da9">M</text><text x="1034.0" y="257" font-size="13.5" text-anchor="middle" fill="#9a9da9">T</text><text x="1058.6" y="257" font-size="13.5" text-anchor="middle" fill="#9a9da9">W</text><text x="1083.3" y="257" font-size="13.5" text-anchor="middle" fill="#9a9da9">T</text><text x="1108.0" y="257" font-size="13.5" text-anchor="middle" fill="#9a9da9">F</text><text x="1132.6" y="257" font-size="13.5" text-anchor="middle" fill="#9a9da9">S</text><text x="1157.3" y="257" font-size="13.5" text-anchor="middle" fill="#9a9da9">S</text><text x="1182.0" y="257" font-size="13.5" text-anchor="middle" fill="#9a9da9">M</text><text x="1206.7" y="257" font-size="13.5" text-anchor="middle" fill="#9a9da9">T</text><text x="1231.3" y="257" font-size="13.5" text-anchor="middle" fill="#9a9da9">W</text><text x="1256.0" y="257" font-size="13.5" text-anchor="middle" fill="#9a9da9">T</text><text x="1280.7" y="257" font-size="13.5" text-anchor="middle" fill="#9a9da9">F</text><text x="1305.3" y="257" font-size="13.5" text-anchor="middle" fill="#9a9da9">S</text><text x="1330.0" y="257" font-size="13.5" text-anchor="middle" fill="#9a9da9">S</text><text x="1354.7" y="257" font-size="13.5" text-anchor="middle" fill="#9a9da9">M</text><text x="1379.3" y="257" font-size="13.5" text-anchor="middle" fill="#9a9da9">T</text><text x="1404.0" y="257" font-size="13.5" text-anchor="middle" fill="#9a9da9">W</text><text x="1428.7" y="257" font-size="13.5" text-anchor="middle" fill="#9a9da9">T</text><text x="1453.4" y="257" font-size="13.5" text-anchor="middle" fill="#9a9da9">F</text><text x="1478.0" y="257" font-size="13.5" text-anchor="middle" fill="#9a9da9">S</text></g><g clip-path="url(#gclip)"><path d="M1053.2,316 V426.5" stroke="#70737c" stroke-width="1.15" fill="none"/><path d="M1053.2,361 H1013.2 V378 H1020" stroke="#70737c" stroke-width="1.15" fill="none"/><path d="M1016.5,375.5 L1020,378 L1016.5,380.5" fill="none" stroke="#70737c" stroke-width="1.2"/><path d="M1053.2,394 H1013.2 V410.8 H1020" stroke="#70737c" stroke-width="1.15" fill="none"/><path d="M1016.5,408.3 L1020,410.8 L1016.5,413.3" fill="none" stroke="#70737c" stroke-width="1.2"/><path d="M1053.2,426.5 H1013.2 V443.7 H1020" stroke="#70737c" stroke-width="1.15" fill="none"/><path d="M1016.5,441.2 L1020,443.7 L1016.5,446.2" fill="none" stroke="#70737c" stroke-width="1.2"/><path d="M1232,475.7 H1238.5 V509.6 H1268" stroke="#70737c" stroke-width="1.15" fill="none"/><path d="M1264.5,507.1 L1268,509.6 L1264.5,512.1" fill="none" stroke="#70737c" stroke-width="1.2"/><path d="M1292,508.1 H1297.2 V805.6 H1379" stroke="#70737c" stroke-width="1.15" fill="none"/><path d="M1375.5,803.1 L1379,805.6 L1375.5,808.1" fill="none" stroke="#70737c" stroke-width="1.2"/><path d="M1297.2,558.4 H1271.4 V574.8 H1279.6" stroke="#70737c" stroke-width="1.15" fill="none"/><path d="M1276.1,572.3 L1279.6,574.8 L1276.1,577.3" fill="none" stroke="#70737c" stroke-width="1.2"/><path d="M1430.2,575.3 H1436.7 V590" stroke="#70737c" stroke-width="1.15" fill="none"/><path d="M1434.2,586.5 L1436.7,590 L1439.2,586.5" fill="none" stroke="#70737c" stroke-width="1.2"/><path d="M985,272.2 H1281 V291 L1273.5,284.2 H985 Z" fill="#3cc0ea"/><rect x="985" y="276.7" width="177.2" height="3.1" fill="#f4fbff"/><path d="M1045.9,298.2 L1057.8,310.1 L1045.9,322 L1034,310.1 Z" fill="#10131d" stroke="#3a8dc2" stroke-width="2.6"/><path d="M1020.8,338 H1096 V357.4 L1089,350.4 H1027.8 L1020.8,357.4 Z" fill="#3cc0ea"/><rect x="1024.9" y="342.5" width="66.4" height="3.1" fill="#f4fbff"/><rect x="1020" y="366.6" width="26.7" height="23.1" fill="#3cc0ea"/><rect x="1020" y="399.3" width="26.7" height="22.7" fill="#3cc0ea"/><rect x="1020" y="432.6" width="26.7" height="22.2" fill="#3cc0ea"/><rect x="1194" y="465" width="38" height="23" fill="#74e3ef"/><rect x="1194" y="465" width="10" height="23" fill="#3bbde9"/><path d="M1280.2,496.2 L1292.1,508.1 L1280.2,520 L1268.3,508.1 Z" fill="#10131d" stroke="#3a8dc2" stroke-width="2.6"/><path d="M1279.6,535.2 H1480 V548.2 H1286.2 L1279.6,554.7 Z" fill="#55cc42"/><rect x="1276" y="541.2" width="9" height="2.2" fill="#f4f4f4"/><rect x="1279.6" y="564" width="150.6" height="22.6" fill="#a3ee8b"/><rect x="1428.5" y="597.5" width="52" height="21.9" fill="#a3ee8b"/><path d="M1379.2,733.3 H1480 V745.8 H1385.5 L1379.2,752 Z" fill="#8a1b7f"/><rect x="1376" y="738.4" width="8.7" height="2.2" fill="#f4f4f4"/><rect x="1379" y="795" width="101" height="22.2" fill="#c93ba2"/><text x="1296.4" y="283.9" font-family="Liberation Sans" font-weight="bold" font-size="16" letter-spacing="0.1" fill="#ebecf0" stroke="#ebecf0" stroke-width="0.25">1. Analysis&#160;&#160;70%</text><text x="1111.5" y="350.4" font-family="Liberation Sans" font-weight="bold" font-size="16" letter-spacing="0.1" fill="#ebecf0" stroke="#ebecf0" stroke-width="0.25">Discussions with Stakeholders&#160;&#160;100%</text><text x="1062.5" y="383.3" font-family="Liberation Sans" font-weight="bold" font-size="16" letter-spacing="0.1" fill="#ebecf0" stroke="#ebecf0" stroke-width="0.25">Stakeholder Requirement 1&#160;&#160;100%</text><text x="1062.5" y="416.1" font-family="Liberation Sans" font-weight="bold" font-size="16" letter-spacing="0.1" fill="#ebecf0" stroke="#ebecf0" stroke-width="0.25">Stakeholder Requirement 2&#160;&#160;100%</text><text x="1062.5" y="449" font-family="Liberation Sans" font-weight="bold" font-size="16" letter-spacing="0.1" fill="#ebecf0" stroke="#ebecf0" stroke-width="0.25">Customer Requirement 1&#160;&#160;100%</text><text x="1247.4" y="481.8" font-family="Liberation Sans" font-weight="bold" font-size="16" letter-spacing="0.1" fill="#ebecf0" stroke="#ebecf0" stroke-width="0.25">Document Current Systems&#160;&#160;27%</text><text x="1446" y="580.6" font-family="Liberation Sans" font-weight="bold" font-size="16" letter-spacing="0.1" fill="#ebecf0" stroke="#ebecf0" stroke-width="0.25">Design Database</text><text x="1079.6" y="316.6" font-family="Liberation Sans" font-size="16" fill="#d3d5dc">10/19/2023</text><text x="1314" y="515.3" font-family="Liberation Sans" font-size="16" fill="#d3d5dc">11/1/2023</text></g><circle cx="984.8" cy="557.6" r="2.1" fill="#3a3d4e"/><circle cx="984.8" cy="565" r="2.1" fill="#3a3d4e"/><circle cx="984.8" cy="571.8" r="2.1" fill="#3a3d4e"/><rect x="134" y="269.1" width="10.8" height="14.8" rx="1.5" fill="none" stroke="#8a8d99" stroke-width="1.4"/><path d="M136.5,272.6 H142.3 M136.5,275.1 H142.3 M136.5,277.6 H142.3 M136.5,280.1 H139" stroke="#7a7d89" stroke-width="1.3"/><rect x="134" y="301.9" width="10.8" height="14.8" rx="1.5" fill="none" stroke="#8a8d99" stroke-width="1.4"/><path d="M136.5,305.4 H142.3 M136.5,307.9 H142.3 M136.5,310.4 H142.3 M136.5,312.9 H139" stroke="#7a7d89" stroke-width="1.3"/></svg></div></div><div id="wb"></div></body></html>
